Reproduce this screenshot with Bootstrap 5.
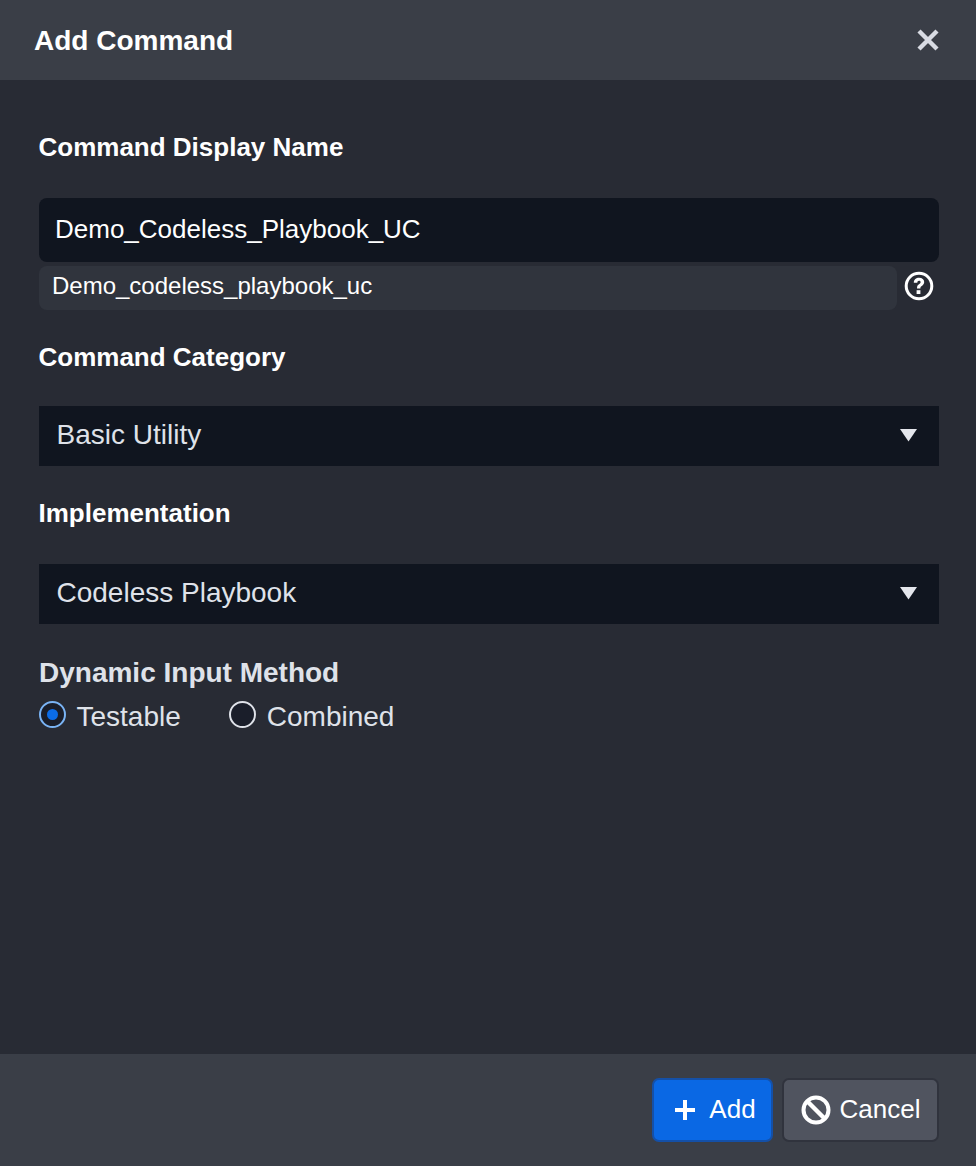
<!DOCTYPE html>
<html lang="en">
<head>
<meta charset="utf-8">
<title>Add Command</title>
<link rel="stylesheet" href="https://cdn.jsdelivr.net/npm/bootstrap@5.3.0/dist/css/bootstrap.min.css">
<style>
html,body{height:100%;margin:0;background:#282b34;font-family:"Liberation Sans",Arial,sans-serif}
.dlg{height:1166px;display:flex;flex-direction:column;background:#282b34;border:0;border-radius:0;color:#fff}
.dlg .modal-header{height:80px;background:#3a3e47;border:0;border-radius:0;padding:2px 34px 0;flex:none}
.dlg-title{font-size:28px;font-weight:700;margin:0;line-height:1;color:#fff}
.x-btn{background:none;border:0;padding:0;width:24px;height:24px;margin-right:2px;margin-top:-2px;display:flex}
.dlg .modal-body{flex:1 1 auto;padding:0 37px 0 39px}
.fld-label{display:block;font-size:26px;font-weight:700;color:#fff;line-height:30px;margin:0 0 0 -.5px}
.lab1{margin-top:52px}
.lab2{margin-top:32px}
.lab3{margin-top:32px}
.name-input.form-control{height:64px;margin-top:36px;background:#10151f;border:0;border-radius:8px;color:#fff;font-size:26px;padding:0 16px 2px 16px;box-shadow:none}
.slug-row{margin-top:4px;gap:7px}
.slug-box{flex:1 1 auto;height:44px;background:#30343d;border-radius:8px;color:#fff;font-size:24px;line-height:40px;padding-left:13px}
.help-ic{width:30px;height:30px;flex:none;margin-right:5px;position:relative;top:-2px}
.sel-box{height:60px;margin-top:34px;background:#10151f;color:#dfe2e9;font-size:28px;padding:0 22px 2px 18px}
.sel-box span{margin-left:-.5px}
.sel-b{margin-top:36px}
.dyn-label{font-size:28px;font-weight:700;color:#dfe2e9;line-height:32px;margin-top:33px}
.radio-row{gap:48.5px;color:#dfe2e9;font-size:28px;line-height:34px;margin-top:11px}
.rad-opt{gap:10.5px}
.rad{width:27px;height:27px;border-radius:50%;display:block;flex:none;position:relative;top:-3px}
.rad-on{border:2px solid #7ab4f5;background:#1a1e2a;padding:6px}
.rad-on::after{content:"";display:block;width:11px;height:11px;border-radius:50%;background:#0b6ce8}
.rad-off{border:2px solid #dfe2e9;background:#1a1e2a}
.dlg .modal-footer{height:112px;background:#3a3e47;border:0;border-radius:0;padding:0 37px 0 0;gap:9px;flex:none}
.act{height:64px;margin:0;border-radius:7px;font-size:26px;display:flex;align-items:center;color:#fff;padding:0 0 2px 0}
.act svg{position:relative;top:1px}
.act-add{width:121px;background:#0a68e4;border:2px solid #1450a8;justify-content:center;gap:13px;padding-left:5px}
.act-cancel{width:157px;background:#50545f;border:2px solid #30333d;justify-content:center;gap:9px}
.act:hover{color:#fff}
</style>
</head>
<body>
<div class="modal-content dlg">
  <div class="modal-header d-flex align-items-center justify-content-between">
    <h5 class="dlg-title">Add Command</h5>
    <button type="button" class="x-btn" aria-label="Close">
      <svg width="24" height="24" viewBox="0 0 24 24"><path d="M3 3 21 21M21 3 3 21" stroke="#d8dbe3" stroke-width="4.400" fill="none"/></svg>
    </button>
  </div>
  <div class="modal-body">
    <label class="fld-label lab1">Command Display Name</label>
    <input class="form-control name-input" type="text" value="Demo_Codeless_Playbook_UC">
    <div class="d-flex align-items-center slug-row">
      <div class="slug-box">Demo_codeless_playbook_uc</div>
      <svg class="help-ic" viewBox="0 0 30 30"><circle cx="15" cy="15" r="12.800" fill="none" stroke="#fff" stroke-width="3"/><path d="M9.800 11.800c0-3.200 2.300-5 5.300-5 3 0 5.100 1.700 5.100 4.200 0 2-1.100 3-2.400 3.900-1.200.8-1.400 1.300-1.400 2.500h-3.400c0-2.200.5-3.100 2-4.100 1-.7 1.600-1.200 1.600-2.100 0-.9-.7-1.400-1.600-1.400-1.100 0-1.700.7-1.700 2z" fill="#fff"/><rect x="12.600" y="19.200" width="3.800" height="3.800" fill="#fff"/></svg>
    </div>
    <label class="fld-label lab2">Command Category</label>
    <div class="d-flex align-items-center justify-content-between sel-box">
      <span>Basic Utility</span>
      <svg width="17" height="13" viewBox="0 0 17 13"><path d="M0 0H17L8.500 12.500Z" fill="#e4e6ec"/></svg>
    </div>
    <label class="fld-label lab3">Implementation</label>
    <div class="d-flex align-items-center justify-content-between sel-box sel-b">
      <span>Codeless Playbook</span>
      <svg width="17" height="13" viewBox="0 0 17 13"><path d="M0 0H17L8.500 12.500Z" fill="#e4e6ec"/></svg>
    </div>
    <div class="dyn-label">Dynamic Input Method</div>
    <div class="d-flex radio-row">
      <div class="d-flex align-items-center rad-opt"><span class="rad rad-on"></span><span>Testable</span></div>
      <div class="d-flex align-items-center rad-opt"><span class="rad rad-off"></span><span>Combined</span></div>
    </div>
  </div>
  <div class="modal-footer d-flex justify-content-end align-items-center">
    <button type="button" class="btn act act-add">
      <svg width="22" height="22" viewBox="0 0 22 22"><path d="M11 1V21M1 11H21" stroke="#fff" stroke-width="4" fill="none"/></svg>
      <span>Add</span>
    </button>
    <button type="button" class="btn act act-cancel">
      <svg width="30" height="30" viewBox="0 0 30 30"><circle cx="15" cy="15" r="12.500" fill="none" stroke="#fff" stroke-width="4"/><path d="M6.500 6.500 23.500 23.500" stroke="#fff" stroke-width="4.400"/></svg>
      <span>Cancel</span>
    </button>
  </div>
</div>
<script src="https://cdn.jsdelivr.net/npm/bootstrap@5.3.0/dist/js/bootstrap.bundle.min.js"></script>
</body>
</html>
